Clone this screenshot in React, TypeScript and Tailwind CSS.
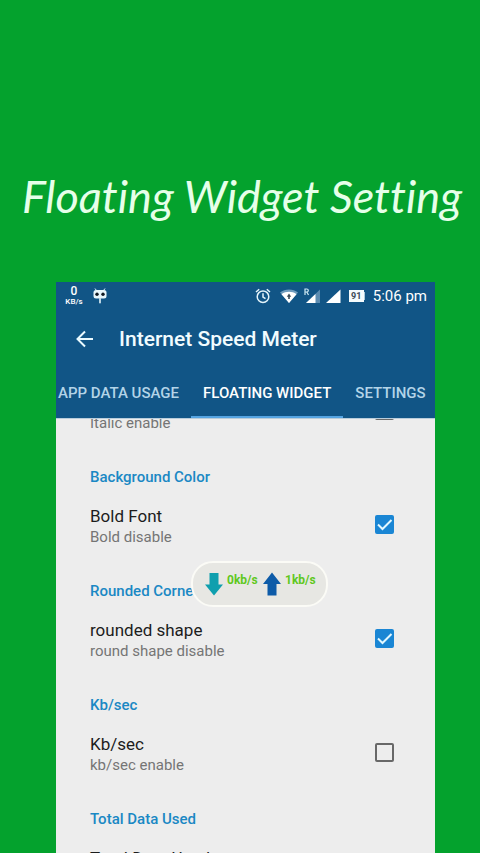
import { useState } from 'react'

type Pref = { id: string; title?: string; summary: string; checked: boolean; category?: string }

const PREFS: Pref[] = [
  { id: 'italic', summary: 'Italic enable', checked: false },
  { id: 'bold', category: 'Background Color', title: 'Bold Font', summary: 'Bold disable', checked: true },
  { id: 'rounded', category: 'Rounded Corner', title: 'rounded shape', summary: 'round shape disable', checked: true },
  { id: 'kbsec', category: 'Kb/sec', title: 'Kb/sec', summary: 'kb/sec enable', checked: false },
  { id: 'total', category: 'Total Data Used', title: 'Total Data Used', summary: '', checked: false },
]

function StatusBar() {
  return (
    <div className="flex h-7 items-center justify-between px-2">
      <div className="flex items-center gap-2 text-white">
        <div className="flex w-5 flex-col items-center font-medium">
          <span className="text-[12px] leading-3">0</span>
          <span className="text-[8px] leading-[10px]">KB/s</span>
        </div>
        <svg className="h-4 w-4" viewBox="0 0 16 16" fill="#e8f6fb">
          <path d="M3 .5l1.500 2M13 .5l-1.500 2" stroke="#e8f6fb" strokeWidth="1" />
          <rect x="1.500" y="2" width="13" height="8.500" rx="2.500" />
          <rect x="7.200" y="10" width="1.600" height="5.500" rx=".8" />
          <circle cx="5" cy="6.300" r="1.700" fill="#101820" />
          <circle cx="11" cy="6.300" r="1.700" fill="#101820" />
        </svg>
      </div>
      <div className="flex items-center gap-2 text-white">
        <svg className="h-4 w-4" viewBox="0 0 16 16" fill="none" stroke="#e4f4fa" strokeWidth="1.500">
          <circle cx="8" cy="8.700" r="5.800" />
          <path d="M8 5.200V9l2.500 1.700M1 4L4.200 1.200M15 4L11.800 1.200" />
        </svg>
        <svg className="h-4 w-5" viewBox="0 0 20 16">
          <path d="M1 4.500C6 .6 14 .6 19 4.500L10 15z" fill="#6e9bbd" />
          <path d="M2.500 6.200C7 3 13 3 17.500 6.200L10 15z" fill="#fff" />
          <path d="M10 5.500l2.200 3.200h-1.400V11H9.200V8.700H7.800z" fill="#3b4a55" />
        </svg>
        <svg className="-ml-1 h-4 w-[18px]" viewBox="0 0 18 16">
          <path d="M17 1.500V15H3z" fill="#5b8bb0" />
          <path d="M12.500 6V15H3z" fill="#fff" />
          <path d="M2 7V1h1.800a1.500 1.500 0 0 1 0 3H2M3.800 4L5.500 7" fill="none" stroke="#cfeaf4" strokeWidth="1.200" />
        </svg>
        <svg className="-ml-1 h-4 w-4" viewBox="0 0 16 16">
          <path d="M15.500 1.500V15H1z" fill="#fff" />
        </svg>
        <div className="flex items-center">
          <span className="flex h-3 w-[15px] items-center justify-center bg-[#f4fbfd] text-[9px] font-bold leading-3 text-[#3b4a55]">91</span>
          <span className="h-2 w-px bg-[#a9c9da]" />
        </div>
        <span className="text-[15px] leading-5">5:06 pm</span>
      </div>
    </div>
  )
}

function Tabs() {
  return (
    <nav className="flex overflow-hidden">
      <button className="h-12 whitespace-nowrap border-b-2 border-transparent pl-0.5 pr-3 text-[15px] font-medium text-[#b3d4e8]">
        APP DATA USAGE
      </button>
      <button className="h-12 whitespace-nowrap border-b-2 border-[#55a4e2] px-3 text-[15px] font-medium text-white">
        FLOATING WIDGET
      </button>
      <button className="h-12 whitespace-nowrap border-b-2 border-transparent px-3 text-[15px] font-medium text-[#b3d4e8]">
        SETTINGS
      </button>
    </nav>
  )
}

function PrefRow({ pref }: { pref: Pref }) {
  const [checked, setChecked] = useState(pref.checked)
  return (
    <section>
      {pref.category && <h2 className="pb-1 pt-5 text-[15px] font-medium leading-5 text-[#1a88c4]">{pref.category}</h2>}
      <label htmlFor={pref.id} className="flex h-[70px] items-center justify-between">
        <span className="flex flex-col">
          <span className="h-[22px] text-[17px] leading-[22px] text-[#1c1c1c]">{pref.title}</span>
          <span className="h-5 text-[15px] leading-5 text-[#757575]">{pref.summary}</span>
        </span>
        <span className="grid pb-[3px]">
          <input
            id={pref.id}
            type="checkbox"
            checked={checked}
            onChange={(e) => setChecked(e.target.checked)}
            className="col-start-1 row-start-1 h-[19px] w-[19px] appearance-none rounded-xs border-2 border-[#686868] checked:border-[#1a86d4] checked:bg-[#1a86d4]"
          />
          {checked && (
            <svg className="pointer-events-none col-start-1 row-start-1 h-[19px] w-[19px]" viewBox="0 0 19 19" fill="none" stroke="#e2f8ff" strokeWidth="2">
              <path d="M3 9.500l4.500 4.500 9-9" />
            </svg>
          )}
        </span>
      </label>
    </section>
  )
}

function FloatingWidget() {
  return (
    <div className="absolute left-[135px] top-[142px] flex h-[46px] w-[137px] items-center rounded-[22px] border-2 border-[#fbfbf6] bg-[#e7e7e3] pl-3 text-[12px] font-bold leading-4 text-[#5fc81e]">
      <svg className="h-6 w-[18px]" viewBox="0 0 18 24" fill="#0f9fae">
        <path d="M4.500 1h9v11.500H18L9 23.500 0 12.500h4.500z" />
      </svg>
      <span className="ml-1 w-9 pb-2">0kb/s</span>
      <svg className="h-6 w-[18px]" viewBox="0 0 18 24" fill="#0d5ba8">
        <path d="M4.500 23.500h9V12H18L9 .5 0 12h4.500z" />
      </svg>
      <span className="ml-1 pb-2">1kb/s</span>
    </div>
  )
}

export default function App() {
  return (
    <main className="flex h-screen flex-col overflow-hidden bg-[#04a22d] font-[Roboto,sans-serif]">
      <h1 className="whitespace-nowrap pb-[58px] pl-[22px] pt-[168px] font-[Lato,sans-serif] text-[45px] italic leading-[56px] text-[#e6ffe9] [font-variant-ligatures:none]">
        Floating Widget Setting
      </h1>
      <div className="ml-14 mr-[45px] flex min-h-0 flex-1 flex-col bg-[#ededed]">
        <header className="bg-[#115586]">
          <StatusBar />
          <div className="flex h-[60px] items-center gap-6 pb-0.5 pl-[19px]">
            <button aria-label="Back">
              <svg className="h-5 w-5" viewBox="0 0 20 20" fill="none" stroke="#eafaff" strokeWidth="2">
                <path d="M18 10H3M10 2.500L2.500 10l7.500 7.500" />
              </svg>
            </button>
            <span className="text-[21px] font-medium leading-7 text-[#f1fcff]">Internet Speed Meter</span>
          </div>
          <Tabs />
        </header>
        <div className="relative min-h-0 flex-1 overflow-hidden border-t border-[#b9cddb]">
          {/* list is scrolled a little past its first row */}
          <div className="-mt-[42px] pl-[34px] pr-[41px]">
            {PREFS.map((pref) => (
              <PrefRow key={pref.id} pref={pref} />
            ))}
          </div>
          <FloatingWidget />
        </div>
      </div>
    </main>
  )
}
